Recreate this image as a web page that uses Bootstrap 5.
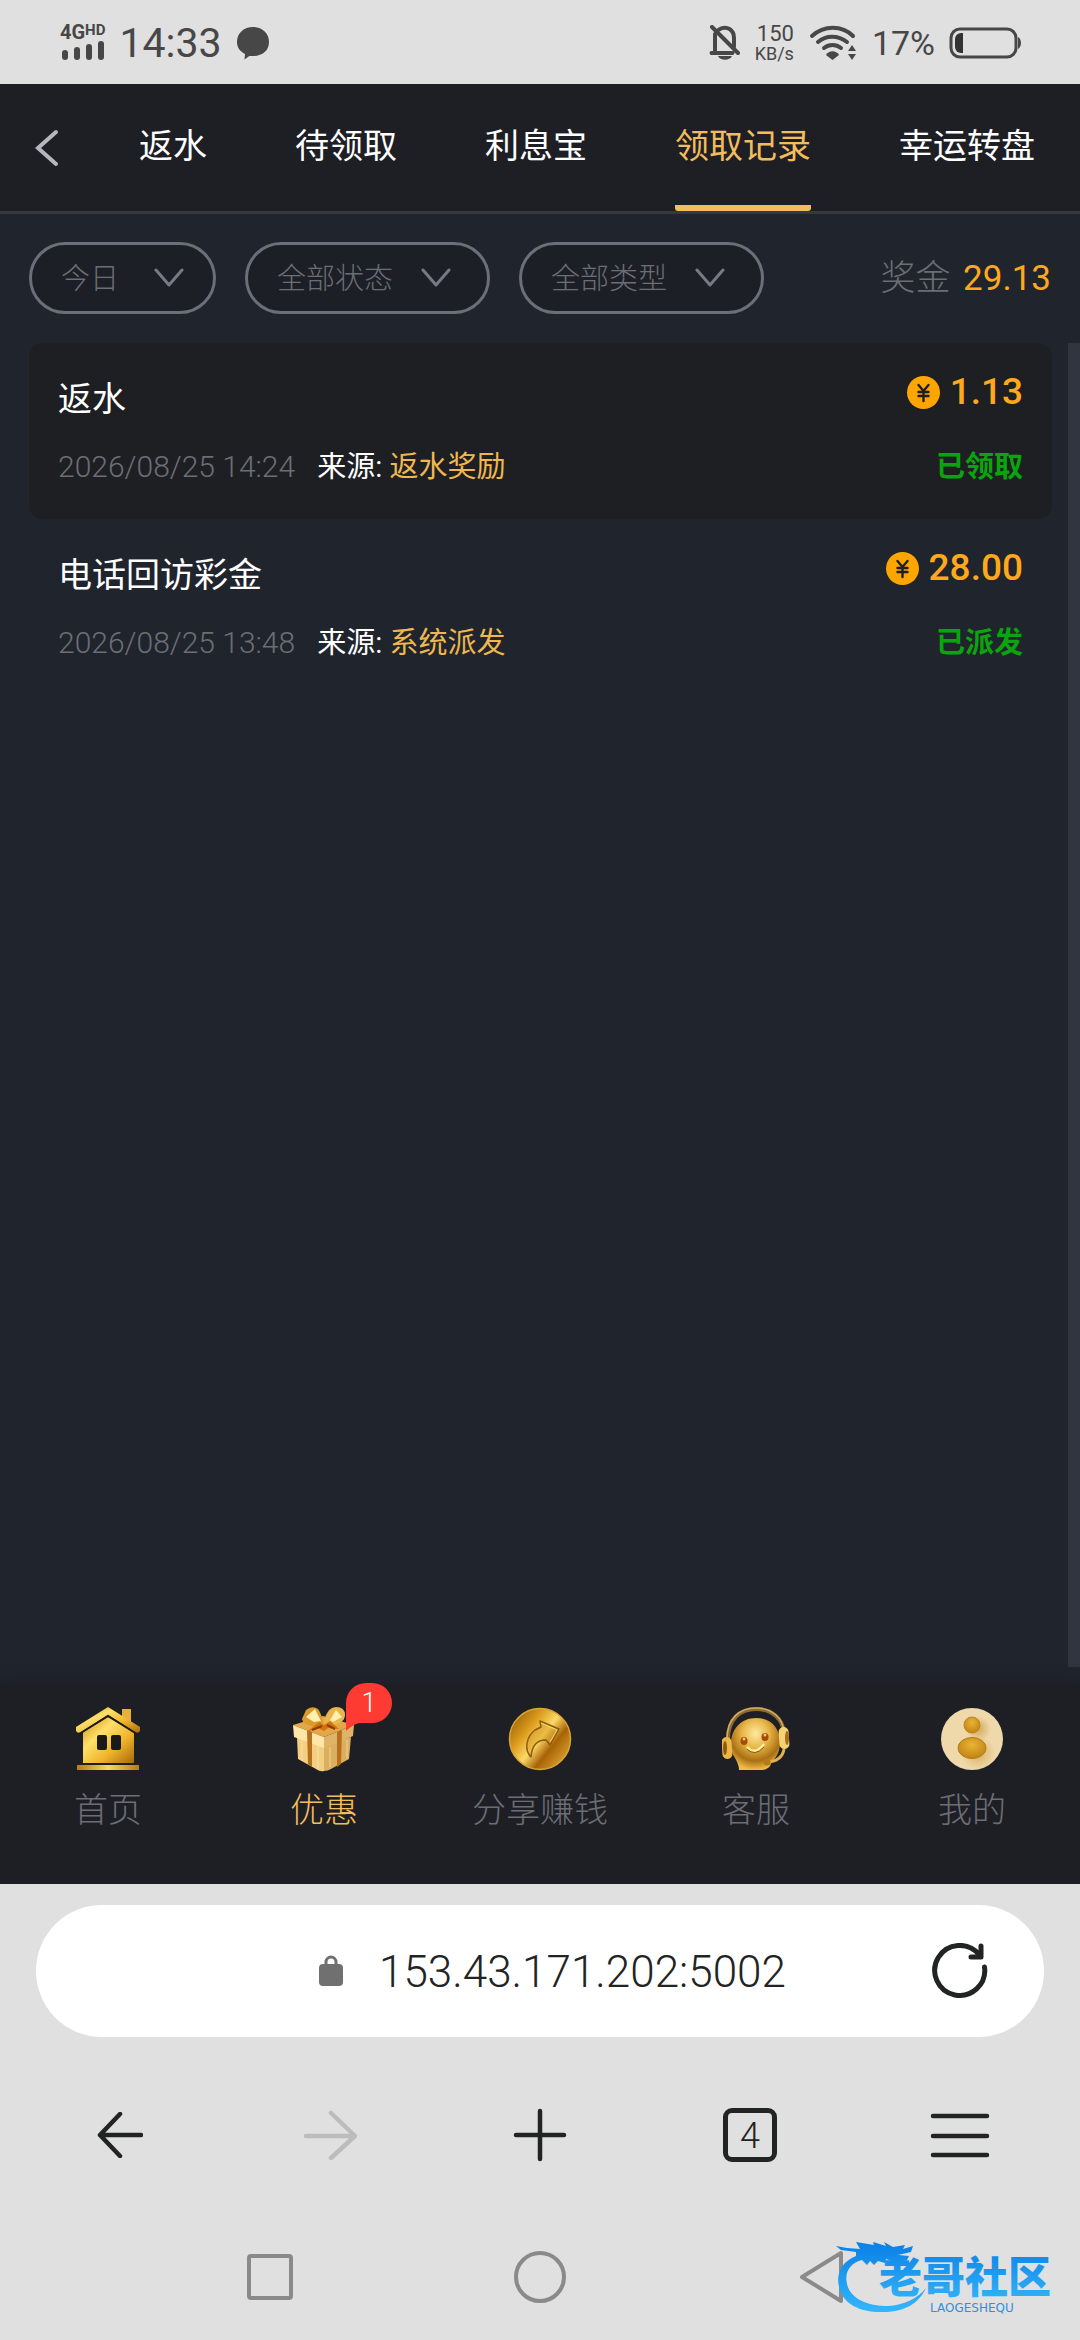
<!DOCTYPE html>
<html lang="zh-CN">
<head>
<meta charset="utf-8">
<meta name="viewport" content="width=device-width, initial-scale=1">
<title>领取记录</title>
<link href="https://cdn.jsdelivr.net/npm/bootstrap@5.3.0/dist/css/bootstrap.min.css" rel="stylesheet">
<style>
  :root { --page: #20242d; --bar: #1e1f25; --gold: #f2bd5c; --dim: #6c6e75; --chrome: #e0e0e0; --ink: #222423; }
  body { background: var(--page); color: #fff; font-family: Roboto, "Noto Sans CJK SC", sans-serif; font-size: 34px; line-height: 48px; font-weight: 300; }
  svg { display: block; flex: none; }
  a { text-decoration: none; color: inherit; }
  button { background: none; border: 0; padding: 0; color: inherit; font-weight: inherit; }

  .statusbar { height: 84px; background: var(--chrome); color: #474747; padding: 2px 58px 0 60px; font-weight: 400; }
  .status-group { gap: 14px; }
  .net-label { font-size: 20px; line-height: 16px; font-weight: 700; }
  .net-label sup { font-size: 15px; line-height: 12px; top: 0; vertical-align: top; }
  .clock { font-size: 41px; }
  .speed-num { font-size: 22px; line-height: 22px; }
  .speed-unit { font-size: 18px; line-height: 18px; }
  .battery-text { font-size: 34px; }

  .topbar { height: 130px; background: var(--bar); border-bottom: 3px solid #343842; padding-left: 32px; }
  .back-btn { width: 63px; }
  .tab-link { color: #fff; padding: 0 44px; font-weight: 400; line-height: 124px; }
  .tab-link span { display: block; height: 127px; }
  .tab-link.active { color: var(--gold); }
  .tab-link.active span { border-bottom: 6px solid var(--gold); border-radius: 3px; }

  .filters { padding: 28px 29px 29px; gap: 29px; }
  .pill-select { width: 245px; height: 72px; border: 3px solid #6b6f79; border-radius: 36px; background-color: #1c1f26; color: var(--dim); font-size: 29px; line-height: 40px; font-weight: 300; padding: 2px 60px 0 29px;
    background-size: 30px 20px; background-position: right 36px center;
    background-image: url("data:image/svg+xml,%3Csvg xmlns='http://www.w3.org/2000/svg' viewBox='0 0 30 20'%3E%3Cpath d='M2 2l13 15L28 2' fill='none' stroke='%23777a82' stroke-width='3' stroke-linecap='round' stroke-linejoin='round'/%3E%3C/svg%3E"); }
  .pill-short { width: 187px; background-position: right 29px center; }
  .bonus { color: var(--dim); font-size: 35px; padding-top: 2px; }
  .bonus b, .source b { font-weight: 400; }
  .bonus b { color: #ffa81c; }

  .records { padding: 0 16px 0 29px; }
  .record { padding: 32px 29px; border-radius: 14px; }
  .record:nth-child(odd) { background: #1e1f23; }
  .record-title { line-height: 48px; font-weight: 400; }
  .record-meta { font-size: 29px; line-height: 40px; color: var(--dim); gap: 22px; margin-top: 24px; }
  .record-meta time { font-size: 30px; }
  .source { color: #fff; font-weight: 400; }
  .source b { color: #efb84f; }
  .amount { font-size: 37px; line-height: 34px; font-weight: 500; color: #ffa81c; gap: 10px; }
  .state { font-size: 29px; line-height: 40px; font-weight: 700; color: #0aa50c; }
  .scroll-thumb { width: 12px; background: #31353f; }

  .tabbar { height: 200px; background: var(--bar); box-shadow: 0 -2px 12px #1b1f28; margin-top: 17px; padding-top: 21px; }
  .tabbar a { color: var(--dim); }
  .tabbar a.active { color: var(--gold); }
  .tab-icon { width: 68px; height: 68px; }
  .tab-text { line-height: 48px; margin-top: 13px; }
  .bubble { left: 56px; top: -22px; width: 46px; height: 48px; }
  .bubble span { font-size: 27px; line-height: 40px; }

  .browser { background: var(--chrome); color: var(--ink); padding-top: 21px; }
  .address { height: 132px; border-radius: 66px; background: #fff; margin: 0 36px; padding: 0 56px 0 283px; }
  .address-input { border: 0; outline: 0; background: none; color: var(--ink); font-size: 44px; line-height: 56px; font-weight: 300; padding: 2px 0 0; margin-left: 36px; min-width: 0; }
  .tools { height: 196px; padding: 0 15px; }
  .tools button { height: 64px; }
  .tab-count { width: 54px; height: 54px; border: 5px solid var(--ink); border-radius: 9px; font-size: 36px; line-height: 46px; }
  .sysnav { height: 107px; padding: 0 135px 20px; }
  .sysnav button { height: 64px; }
  .watermark { right: 18px; bottom: 20px; width: 226px; height: 80px; }
</style>
<script src="https://cdn.jsdelivr.net/npm/bootstrap@5.3.0/dist/js/bootstrap.bundle.min.js"></script>
</head>
<body class="d-flex flex-column min-vh-100">

<div class="statusbar d-flex align-items-center justify-content-between">
  <div class="status-group d-flex align-items-center">
    <div>
      <div class="net-label">4G<sup>HD</sup></div>
      <svg width="44" height="22" viewBox="0 0 44 22" stroke="#474747" stroke-width="6" stroke-linecap="round"><path d="M5 13v4M17 10v7M29 7v10M41 4v13"/></svg>
    </div>
    <span class="clock">14:33</span>
    <svg width="34" height="34" viewBox="0 0 34 34" fill="#474747"><path d="M17 1c9 0 16 6 16 15S26 30 17 30c-2 0-3 0-4 .2L8.500 33.500 9 28C4 25.500 1 21.500 1 16 1 7 8 1 17 1z"/></svg>
  </div>
  <div class="status-group d-flex align-items-center">
    <svg width="32" height="36" viewBox="0 0 32 36" fill="none" stroke="#474747" stroke-width="4" stroke-linecap="round"><path d="M6 9v17M2.500 28h21M10 4.500C18 0 25 5 25 13v9M3 2l26 26"/><path d="M9 31h14c-2 5-12 5-14 0z" fill="#474747" stroke="none"/></svg>
    <div class="text-end">
      <div class="speed-num">150</div>
      <div class="speed-unit">KB/s</div>
    </div>
    <svg width="50" height="36" viewBox="0 0 50 36" fill="none" stroke="#474747" stroke-width="4" stroke-linecap="round"><path d="M4 11C16 0 34 0 45 11M10 17c8-7 20-7 29 0M16 23c5-4 12-4 17 0"/><path d="M18 30c3-5 10-5 13 0l-6.500 5z" fill="#474747" stroke="none"/><path d="M40 26l4-6 4 6zM40 29h8l-4 6z" fill="#474747" stroke="none"/></svg>
    <span class="battery-text">17%</span>
    <svg width="73" height="32" viewBox="0 0 73 32"><rect x="2" y="2" width="65" height="28" rx="9" fill="none" stroke="#474747" stroke-width="3"/><path d="M14 6v20h-2a6 6 0 0 1-6-6v-8a6 6 0 0 1 6-6z" fill="#333"/><path d="M69 10c4 2 4 10 0 12z" fill="#474747"/></svg>
  </div>
</div>

<header class="topbar d-flex">
  <button class="back-btn" type="button" aria-label="返回"><svg width="30" height="40" viewBox="0 0 30 40" fill="none" stroke="#b4b8be" stroke-width="4" stroke-linecap="round"><path d="M24 4L6 20l18 16"/></svg></button>
  <nav class="d-flex flex-nowrap text-nowrap overflow-hidden">
    <a class="tab-link" href="#"><span>返水</span></a>
    <a class="tab-link" href="#"><span>待领取</span></a>
    <a class="tab-link" href="#"><span>利息宝</span></a>
    <a class="tab-link active" href="#" aria-current="page"><span>领取记录</span></a>
    <a class="tab-link" href="#"><span>幸运转盘</span></a>
  </nav>
</header>

<main class="d-flex flex-column flex-grow-1">
  <form class="filters d-flex align-items-center">
    <select class="form-select pill-select pill-short" aria-label="日期"><option>今日</option></select>
    <select class="form-select pill-select" aria-label="状态"><option>全部状态</option></select>
    <select class="form-select pill-select" aria-label="类型"><option>全部类型</option></select>
    <div class="bonus ms-auto text-nowrap">奖金 <b class="ms-1">29.13</b></div>
  </form>

  <div class="d-flex flex-grow-1">
    <div class="records flex-grow-1">
      <article class="record d-flex justify-content-between">
        <div>
          <div class="record-title">返水</div>
          <div class="record-meta d-flex"><time>2026/08/25 14:24</time><span class="source">来源: <b>返水奖励</b></span></div>
        </div>
        <div class="d-flex flex-column justify-content-between align-items-end">
          <div class="amount d-flex align-items-center"><svg width="33" height="33" viewBox="0 0 33 33"><circle cx="16.500" cy="16.500" r="16.500" fill="#ffa500"/><path d="M11.500 9l5 6 5-6M16.500 15v10M11.500 16h10M11.500 20h10" fill="none" stroke="#1e1f23" stroke-width="2.400" stroke-linecap="round"/></svg>1.13</div>
          <div class="state">已领取</div>
        </div>
      </article>
      <article class="record d-flex justify-content-between">
        <div>
          <div class="record-title">电话回访彩金</div>
          <div class="record-meta d-flex"><time>2026/08/25 13:48</time><span class="source">来源: <b>系统派发</b></span></div>
        </div>
        <div class="d-flex flex-column justify-content-between align-items-end">
          <div class="amount d-flex align-items-center"><svg width="33" height="33" viewBox="0 0 33 33"><circle cx="16.500" cy="16.500" r="16.500" fill="#ffa500"/><path d="M11.500 9l5 6 5-6M16.500 15v10M11.500 16h10M11.500 20h10" fill="none" stroke="#1e1f23" stroke-width="2.400" stroke-linecap="round"/></svg>28.00</div>
          <div class="state">已派发</div>
        </div>
      </article>
    </div>
    <div class="scroll-thumb"></div>
  </div>
</main>

<nav class="tabbar row g-0 text-center">
  <a class="col d-flex flex-column align-items-center" href="#">
    <svg class="tab-icon" viewBox="0 0 68 68">
      <defs>
        <linearGradient id="goldA" x1="0" y1="0" x2="1" y2="1"><stop offset="0" stop-color="#c88a12"/><stop offset=".35" stop-color="#ffe06a"/><stop offset=".65" stop-color="#f0b52c"/><stop offset="1" stop-color="#a86a0c"/></linearGradient>
        <linearGradient id="goldB" x1="0" y1="0" x2="1" y2="0"><stop offset="0" stop-color="#b97a10"/><stop offset=".5" stop-color="#f8d860"/><stop offset="1" stop-color="#b97a10"/></linearGradient>
      </defs>
      <path d="M48 4h9v15l-9-7z" fill="#e5b136"/>
      <path d="M34 12L9 27V58h51V27z" fill="url(#goldA)"/>
      <path d="M34 2L2 22v4q2 3 5 1L34 10l27 17q3 2 5-1v-4z" fill="url(#goldA)"/>
      <path d="M6 28.500L34 11l28 17.500" fill="none" stroke="#1e1b14" stroke-width="2"/>
      <path d="M3 60h62v5H3z" fill="url(#goldB)"/>
      <rect x="23" y="30" width="10" height="15" rx="2" fill="#1b1a16"/><rect x="37" y="30" width="10" height="15" rx="2" fill="#1b1a16"/>
    </svg>
    <span class="tab-text">首页</span>
  </a>
  <a class="col d-flex flex-column align-items-center active" href="#">
    <div class="position-relative">
      <svg class="tab-icon" viewBox="0 0 68 68">
        <path d="M7 32l27 8v26q-4 1-8-2L8 54z" fill="#f3cf82"/>
        <path d="M34 40l27-8-2 22-18 10q-3 2-7 2z" fill="#dcae60"/>
        <path d="M3 20l30-9 31 9-30 12z" fill="#e3a748"/>
        <path d="M3 20l31 12v11L4 32z" fill="#ffe6a6"/>
        <path d="M34 32l30-12-1 11-29 12z" fill="#dfb467"/>
        <path d="M17 25l5 2v35l-4-3zM47 27l5-2-1 34-4 3z" fill="#b6701b"/>
        <path d="M12 30v26M28 40v24M40 42v20M57 35v18" stroke="#fff0b8" stroke-width="1" opacity=".6"/>
        <path d="M33 20C22 24 12 18 12 14l4-9q6-5 12-1 4 5 5 16z" fill="#dc9a2c"/>
        <path d="M34 20c0-9 5-18 12-18q9 0 9 8c0 7-9 12-21 10z" fill="#e9b64d"/>
        <path d="M16 12l9-8 6 12-7 1zM40 15l6-10 6 7-9 5z" fill="#fff0ae"/>
        <path d="M17 27l12-10 5 3 6-4 9 8-11-1-4 3-6-3z" fill="#d4720e"/>
        <path d="M22 25l10-4M37 20l8 4" stroke="#8c3d05" stroke-width="2"/>
      </svg>
      <div class="bubble position-absolute">
        <svg class="position-absolute" width="46" height="48" viewBox="0 0 46 48"><path d="M0 20A20 20 0 0 1 20 0h6a20 20 0 0 1 0 40H14Q9 40 0 48z" fill="#fd3b32"/></svg>
        <span class="position-relative d-block text-white">1</span>
      </div>
    </div>
    <span class="tab-text">优惠</span>
  </a>
  <a class="col d-flex flex-column align-items-center" href="#">
    <svg class="tab-icon" viewBox="0 0 68 68">
      <defs><linearGradient id="coin" x1="0" y1=".1" x2="1" y2=".9"><stop offset="0" stop-color="#8f5707"/><stop offset=".3" stop-color="#dc9c1c"/><stop offset=".5" stop-color="#fbd966"/><stop offset=".68" stop-color="#a76306"/><stop offset="1" stop-color="#e9b238"/></linearGradient></defs>
      <circle cx="34" cy="34" r="30.500" fill="url(#coin)" stroke="#d8a637" stroke-width="1.500"/>
      <path d="M34 16l19 8-9 16-4-5c-8 0-14 4-15 17-7-7-5-20 4-27l6-3z" fill="#d0901c" fill-opacity=".4" stroke="#8f5c0f" stroke-width="1.500" stroke-linejoin="round"/>
      <path d="M35 18l16 7-7 12" fill="none" stroke="#f7d670" stroke-width="1"/>
    </svg>
    <span class="tab-text">分享赚钱</span>
  </a>
  <a class="col d-flex flex-column align-items-center" href="#">
    <svg class="tab-icon" viewBox="0 0 68 68">
      <defs><radialGradient id="face" cx=".5" cy=".3" r=".7"><stop offset="0" stop-color="#ffeaa0"/><stop offset=".4" stop-color="#e6b445"/><stop offset=".75" stop-color="#a96f14"/><stop offset="1" stop-color="#f0bd49"/></radialGradient></defs>
      <path d="M6 34C6 14 18 4 34 4s27 10 28 24" fill="none" stroke="#8e6b31" stroke-width="4"/>
      <path d="M5 34C5 13 18 3 34 3s27 10 28 24" fill="none" stroke="#d3ab62" stroke-width="1.500"/>
      <path d="M34 13c15 0 24 10 24 25 0 10-5 16-9 20 0 4-5 7-9 7H17c0-5-2-8-4-12-3-4-4-9-4-14 0-15 10-26 25-26z" fill="url(#face)"/>
      <rect x="0" y="32" width="10" height="22" rx="5" fill="#e9b849" transform="rotate(-4 5 43)"/><ellipse cx="3" cy="43" rx="2" ry="7" fill="#8f5c0d"/>
      <rect x="57" y="22" width="10" height="22" rx="5" fill="#f6d277" transform="rotate(-4 62 33)"/><ellipse cx="65" cy="33" rx="2" ry="7" fill="#a66e16"/>
      <ellipse cx="22" cy="36" rx="3.500" ry="4" fill="#a34b08"/><ellipse cx="43" cy="32" rx="3.500" ry="4" fill="#a34b08"/><circle cx="22" cy="34" r="1.500" fill="#ffc36a"/><circle cx="43" cy="30" r="1.500" fill="#ffc36a"/>
      <path d="M25 42q8 9 17-3" fill="none" stroke="#fff0a4" stroke-width="2.500"/><path d="M25 44q8 8 17-2" fill="none" stroke="#8e5706" stroke-width="1"/>
      <path d="M62 44c-1 8-8 13-17 13" fill="none" stroke="#dfb153" stroke-width="3"/><circle cx="45" cy="57" r="3.500" fill="#b77a18"/>
    </svg>
    <span class="tab-text">客服</span>
  </a>
  <a class="col d-flex flex-column align-items-center" href="#">
    <svg class="tab-icon" viewBox="0 0 68 68">
      <defs><radialGradient id="ball" cx=".5" cy=".35" r=".6"><stop offset="0" stop-color="#e9b436"/><stop offset="1" stop-color="#c48716"/></radialGradient>
      <radialGradient id="glow"><stop offset="0" stop-color="#c99336"/><stop offset="1" stop-color="#c99336" stop-opacity="0"/></radialGradient></defs>
      <circle cx="34" cy="34" r="31" fill="#efd9aa"/>
      <circle cx="40" cy="24" r="13" fill="url(#glow)" opacity=".7"/><circle cx="40" cy="48" r="17" fill="url(#glow)" opacity=".6"/>
      <circle cx="34" cy="20" r="8" fill="url(#ball)" stroke="#bb8423"/><ellipse cx="34" cy="43" rx="14" ry="10.500" fill="url(#ball)" stroke="#b37b1a"/>
    </svg>
    <span class="tab-text">我的</span>
  </a>
</nav>

<footer class="browser position-relative">
  <div class="address d-flex align-items-center">
    <svg width="24" height="32" viewBox="0 0 24 32"><rect x="0" y="9" width="24" height="22" rx="4" fill="#707070"/><path d="M7 11V7a5 5 0 0 1 10 0v4" fill="none" stroke="#707070" stroke-width="3"/></svg>
    <input class="address-input flex-grow-1" type="text" value="153.43.171.202:5002" aria-label="网址">
    <button type="button" aria-label="刷新"><svg width="56" height="56" viewBox="0 0 56 56" fill="none" stroke="#222423" stroke-width="5" stroke-linecap="round" stroke-linejoin="round"><path d="M52.500 24A25 25 0 1 1 47 11.500M49 3v11H39"/></svg></button>
  </div>
  <div class="tools row g-0 align-items-center">
    <button class="col d-flex justify-content-center align-items-center" type="button" aria-label="后退"><svg width="46" height="46" viewBox="0 0 46 46" fill="none" stroke="#222423" stroke-width="4.500" stroke-linecap="round" stroke-linejoin="round"><path d="M44 23H3M23 2L3 23l20 21"/></svg></button>
    <button class="col d-flex justify-content-center align-items-center" type="button" aria-label="前进"><svg width="54" height="50" viewBox="0 0 54 50" fill="none" stroke="#bcbcbc" stroke-width="4.500" stroke-linecap="round" stroke-linejoin="round"><path d="M3 26h48M28 3l24 23-24 22"/></svg></button>
    <button class="col d-flex justify-content-center align-items-center" type="button" aria-label="新建标签"><svg width="54" height="54" viewBox="0 0 54 54" stroke="#222423" stroke-width="4.500" stroke-linecap="round"><path d="M3 27h48M27 3v48"/></svg></button>
    <button class="col d-flex justify-content-center align-items-center" type="button" aria-label="标签页"><span class="tab-count">4</span></button>
    <button class="col d-flex justify-content-center align-items-center" type="button" aria-label="菜单"><svg width="60" height="46" viewBox="0 0 60 46" stroke="#222423" stroke-width="4.500" stroke-linecap="round"><path d="M3 4h54M3 24h54M3 43h54"/></svg></button>
  </div>
  <div class="sysnav row g-0 align-items-center">
    <button class="col d-flex justify-content-center align-items-center" type="button" aria-label="最近任务"><svg width="46" height="46" viewBox="0 0 46 46"><rect x="2" y="2" width="42" height="42" rx="2" fill="none" stroke="#8a8a8a" stroke-width="4"/></svg></button>
    <button class="col d-flex justify-content-center align-items-center" type="button" aria-label="主屏幕"><svg width="52" height="52" viewBox="0 0 52 52"><circle cx="26" cy="26" r="24" fill="none" stroke="#8a8a8a" stroke-width="4"/></svg></button>
    <button class="col d-flex justify-content-center align-items-center" type="button" aria-label="返回"><svg class="ms-4" width="46" height="54" viewBox="0 0 46 54"><path d="M42 3v48L3 27z" fill="none" stroke="#8a8a8a" stroke-width="4" stroke-linejoin="round"/></svg></button>
  </div>
  <svg class="watermark position-absolute" viewBox="0 0 226 80" role="img" aria-label="老哥社区">
    <defs><linearGradient id="sea" x1="0" y1="0" x2="0" y2="1"><stop offset="0" stop-color="#0a80e6"/><stop offset="1" stop-color="#34b6fa"/></linearGradient></defs>
    <path d="M20 16C5 22 0 34 3 47c4 18 23 26 45 25 21 0 35-9 42-24-9 11-22 17-38 18-22 0-38-8-41-22C8 31 15 23 26 20l5 5 3-4 4 4 4-4 7 2 1-4 9 3 12-2 2-4-11-1 13-3 2-6-10 3 2-4-12 2-9-5 2 4-13-4 1 3L20 2l4 7-13-1L0 6l5 4 15 2z" fill="url(#sea)"/>
    <text x="43" y="53" font-family="Noto Sans CJK SC, sans-serif" font-weight="900" font-size="43" fill="url(#sea)">老哥社区</text>
    <text x="94" y="72" font-family="DejaVu Sans, sans-serif" font-weight="400" font-size="12" fill="#2f8fdc">LAOGESHEQU</text>
  </svg>
</footer>
</body>
</html>
